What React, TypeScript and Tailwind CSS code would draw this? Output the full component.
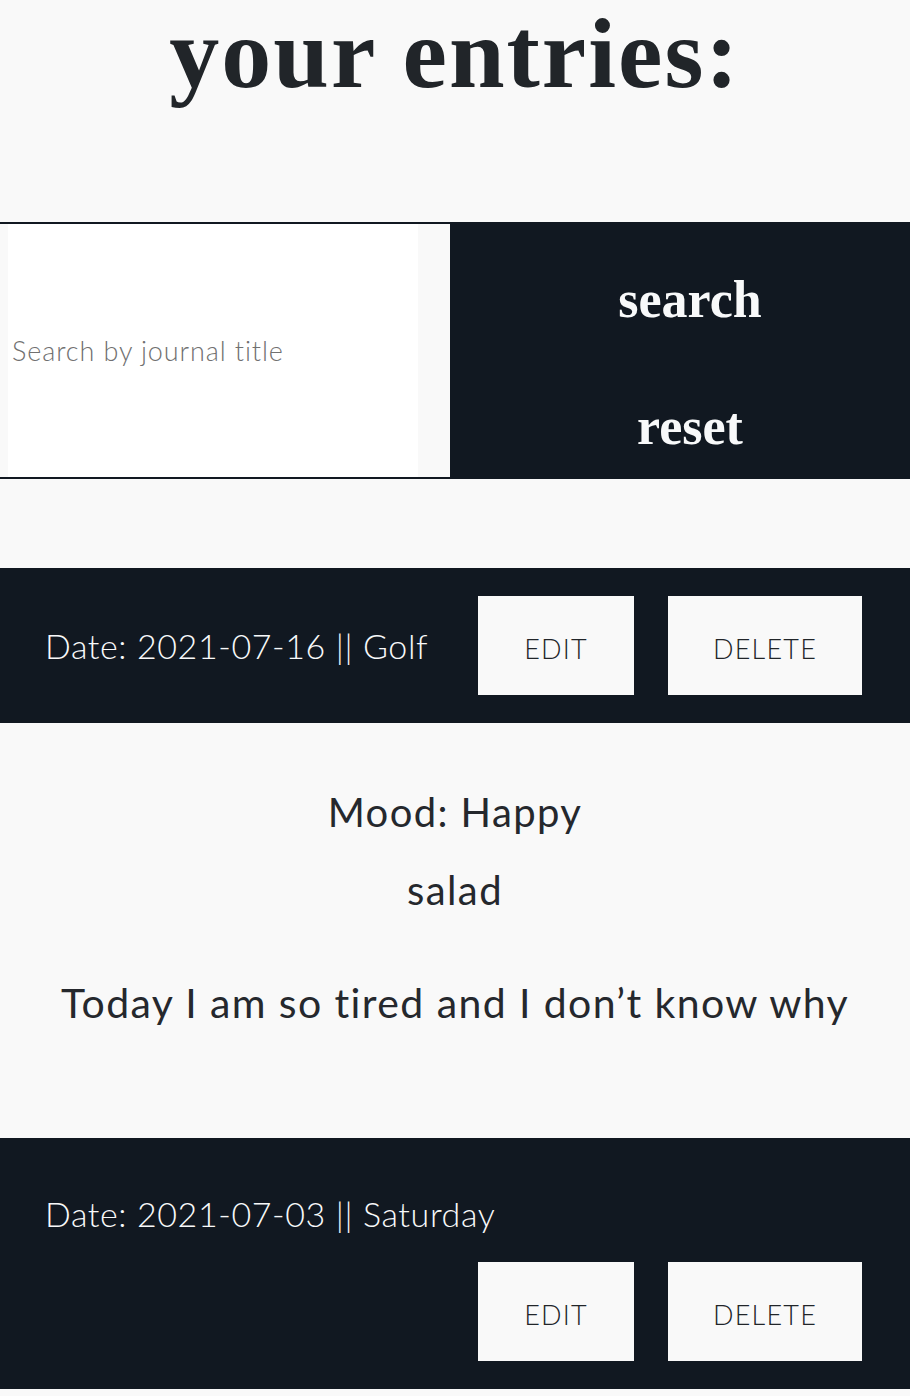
import React, { useState } from 'react';

type Entry = {
  id: number;
  date: string;
  title: string;
  mood?: string;
  food?: string;
  body?: string;
};

const entries: Entry[] = [
  {
    id: 1,
    date: '2021-07-16',
    title: 'Golf',
    mood: 'Happy',
    food: 'salad',
    body: 'Today I am so tired and I don\u2019t know why',
  },
  { id: 2, date: '2021-07-03', title: 'Saturday' },
];

function EntryCard({ entry }: { entry: Entry }) {
  return (
    <div>
      <div className="flex flex-wrap items-center bg-[#111821] py-7 pl-[45px] pr-12">
        <p className="py-7 text-[34px] leading-10 font-light tracking-[0.6px] text-[#f8f9fa]">
          Date: {entry.date} || {entry.title}
        </p>
        <div className="ml-auto flex gap-[34px]">
          <button className="h-[99px] w-[156px] bg-[#f9f9f9] pt-2 text-[27px] font-light tracking-[1.2px] text-[#212529]">
            EDIT
          </button>
          <button className="h-[99px] w-[194px] bg-[#f9f9f9] pt-2 text-[27px] font-light tracking-[1.2px] text-[#212529]">
            DELETE
          </button>
        </div>
      </div>
      {entry.mood && (
        <div className="pt-[59px] pb-[105px] text-center text-[40px] leading-[60px] tracking-[1.4px] text-[#25282d]">
          <p>Mood: {entry.mood}</p>
          <p className="mt-[18px]">{entry.food}</p>
          <p className="mt-[53px] text-[41px]">{entry.body}</p>
        </div>
      )}
    </div>
  );
}

export default function App() {
  const [query, setQuery] = useState('');

  return (
    <div className="min-h-screen bg-[#f9f9f9] pt-1 font-['Lato','Liberation_Sans',sans-serif]">
      <h1 className="text-center font-['Liberation_Serif',serif] text-[100px] leading-[100px] font-bold tracking-[2px] text-[#212529]">
        your entries:
      </h1>

      <form
        className="mt-[118px] flex border-y-2 border-[#111821]"
        onSubmit={(e) => e.preventDefault()}
      >
        <div className="pl-2">
          <input
            value={query}
            onChange={(e) => setQuery(e.target.value)}
            placeholder="Search by journal title"
            className="h-[253px] w-[410px] bg-white px-1 text-[27px] font-light tracking-[0.9px] text-[#212529] outline-none placeholder:text-[#707070]"
          />
        </div>
        <div className="ml-8 -my-[2px] flex flex-1 flex-col gap-[27px] bg-[#111821] pt-[28px] pl-5">
          <button
            type="submit"
            className="h-[100px] font-['Liberation_Serif',serif] text-[52px] font-bold text-[#f8f9fa]"
          >
            search
          </button>
          <button
            type="button"
            onClick={() => setQuery('')}
            className="h-[100px] font-['Liberation_Serif',serif] text-[52px] font-bold text-[#f8f9fa]"
          >
            reset
          </button>
        </div>
      </form>

      <div className="mt-[89px]">
        {entries.map((entry) => (
          <EntryCard key={entry.id} entry={entry} />
        ))}
      </div>
      <div className="h-20" />
    </div>
  );
}
